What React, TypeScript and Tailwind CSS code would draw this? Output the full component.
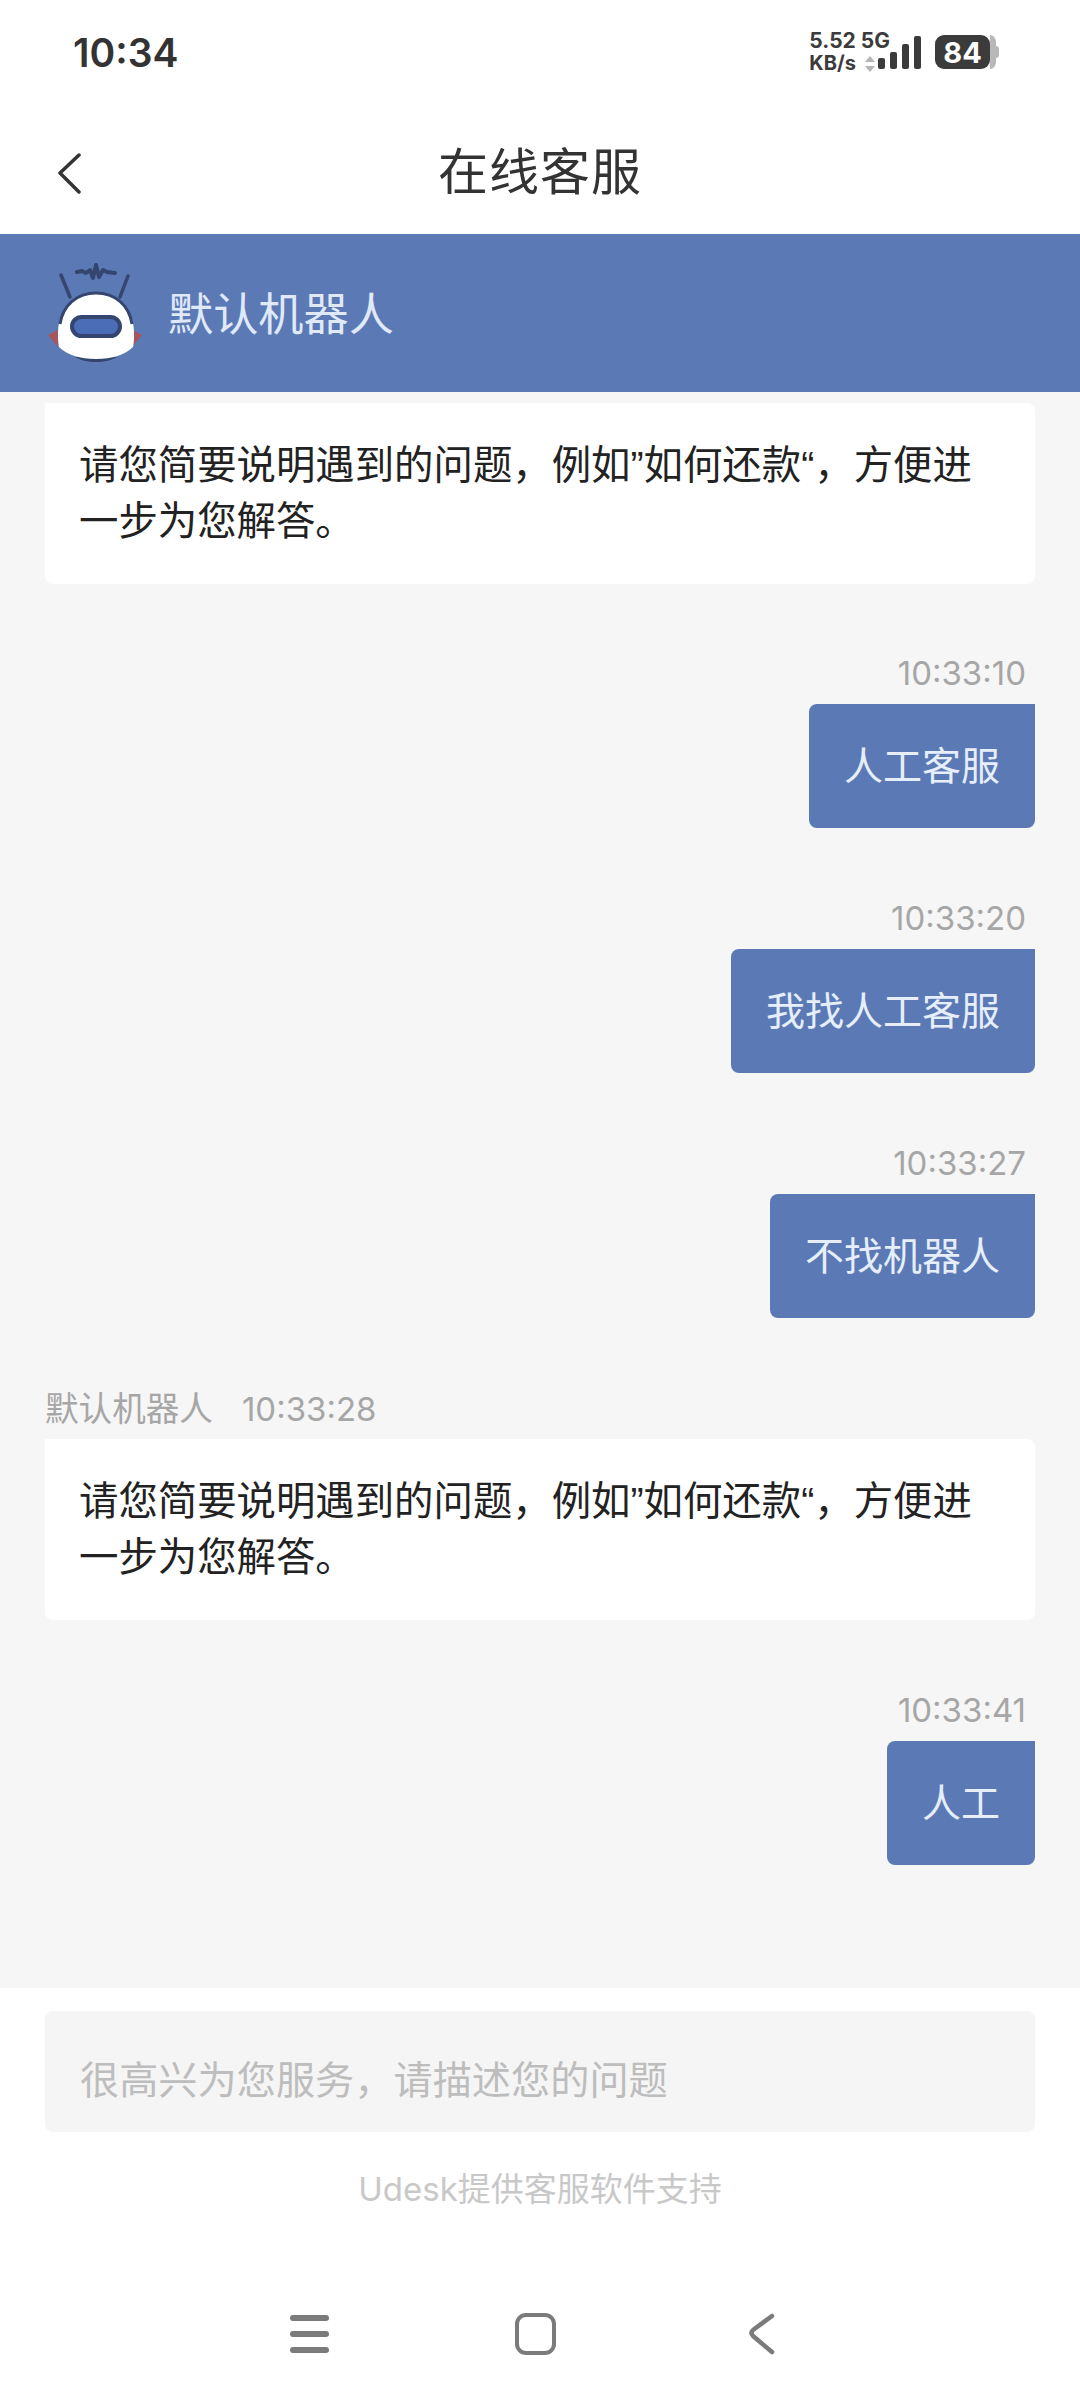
const font = "font-['Inter','Noto_Sans_CJK_SC',sans-serif]";

const StatusBar = () => (
  <div className="h-[100px] flex items-center justify-between pl-[73px] pr-[80px] pt-[4px] bg-white">
    <span className="text-[39px] leading-none font-semibold text-[#333333]">10:34</span>
    <div className="flex items-center">
      <div className="flex flex-col text-[#3b3b3b] font-bold leading-none">
        <span className="text-[21px] leading-[23px]">5.52 5G</span>
        <div className="flex items-center gap-[9px]">
          <span className="text-[20px] leading-[23px]">KB/s</span>
          <svg width="10" height="16" viewBox="0 0 10 16">
            <path d="M5 0l5 6H0zM5 16l5-6H0z" fill="#b5b5b5" />
          </svg>
        </div>
      </div>
      <svg width="44" height="34" viewBox="0 0 44 34" className="-ml-[12px] mr-[13px] mt-[1px]">
        <rect x="0" y="22" width="7" height="11" rx="2" fill="#3b3b3b" />
        <rect x="12" y="16" width="7" height="17" rx="2" fill="#3b3b3b" />
        <rect x="24" y="8" width="7" height="25" rx="2" fill="#3b3b3b" />
        <rect x="36" y="0" width="7" height="33" rx="2" fill="#3b3b3b" />
      </svg>
      <div className="flex items-center">
        <div className="w-[55px] h-[34px] rounded-[9px] bg-[#3b3b3b] text-white text-[29px] font-bold leading-none flex items-center justify-center">
          84
        </div>
        <svg width="10" height="34" viewBox="0 0 10 34">
          <path d="M0 0c3 0 5 2 6 6v5c2 0 3 1 3 3v6c0 2-1 3-3 3v5c-1 4-3 6-6 6z" fill="#b8b8b8" />
        </svg>
      </div>
    </div>
  </div>
);

const RobotLogo = () => (
  <svg width="96" height="100" viewBox="0 0 96 100" className="shrink-0">
    <path d="M30 9l5-1 4 2 4-3 3 8 3-13 3 12 4-7 4 2 8 1" fill="none" stroke="#34466f" strokeWidth="4" strokeLinecap="round" strokeLinejoin="round" />
    <path d="M14 12l9 22M81 13l-8 21" stroke="#34466f" strokeWidth="3.5" strokeLinecap="round" />
    <path d="M1 72l10-5v17z" fill="#a8545c" />
    <path d="M95 72l-10-5v17z" fill="#a8545c" />
    <path d="M28 94h42c-5 3-12 5-21 5s-16-2-21-5z" fill="#34466f" />
    <path d="M49 30c-23 0-38 17-38 40 0 5 0 10 1 14 8 8 21 12 37 12s29-4 37-12c1-4 1-9 1-14 0-23-15-40-38-40z" fill="#ffffff" />
    <path d="M13 61c3-19 17-31 36-31s33 12 36 31" fill="none" stroke="#34466f" strokeWidth="3" />
    <rect x="25" y="54" width="48" height="19" rx="9.5" fill="#4b6cb7" stroke="#34466f" strokeWidth="4" />
  </svg>
);

const Bubble = ({ time, text }: { time: string; text: string }) => (
  <div className="flex flex-col items-end">
    <span className="text-[33px] leading-[44px] text-[#a6a6a6] pr-[9px] mb-[9px]">{time}</span>
    <div className="bg-[#5b7ab5] text-[#e6eefb] text-[39px] leading-[56px] pl-[35px] pr-[35px] py-[34px] rounded-[8px] rounded-tr-none">
      {text}
    </div>
  </div>
);

const BotText = () => (
  <div className="bg-white text-[#222222] text-[39.4px] leading-[56px] pl-[34px] pr-[50px] pt-[34px] pb-[35px] rounded-[8px] rounded-tl-[2px] font-['Liberation_Sans','Noto_Sans_CJK_SC',sans-serif]">
    请您简要说明遇到的问题，例如”如何还款“，方便进一步为您解答。
  </div>
);

export default function App() {
  return (
    <div className={`w-[1080px] h-[2400px] flex flex-col bg-white ${font}`}>
      <StatusBar />

      <div className="h-[134px] relative flex items-center justify-center pt-[10px]">
        <svg width="26" height="41" viewBox="0 0 26 41" className="absolute left-[56px] top-[53px]" fill="none">
          <path d="M23 2L4 20l19 19" stroke="#333333" strokeWidth="3.5" strokeLinecap="round" strokeLinejoin="round" />
        </svg>
        <span className="text-[50px] leading-none text-[#333333] tracking-[1px]">在线客服</span>
      </div>

      <div className="h-[158px] bg-[#5b7ab5] flex items-center pl-[47px] gap-[25px]">
        <RobotLogo />
        <span className="text-[45.2px] leading-none text-[#e0e9f8] pt-[3px]">默认机器人</span>
      </div>

      <div className="flex-1 bg-[#f6f6f6] px-[45px] pt-[11px]">
        <BotText />

        <div className="flex flex-col gap-[68px] mt-[67px]">
          <Bubble time="10:33:10" text="人工客服" />
          <Bubble time="10:33:20" text="我找人工客服" />
          <Bubble time="10:33:27" text="不找机器人" />
        </div>

        <div className="mt-[69px]">
          <div className="text-[33px] leading-[44px] text-[#a6a6a6] mb-[8px] flex gap-[29px]">
            <span className="text-[33.6px]">默认机器人</span>
            <span>10:33:28</span>
          </div>
          <BotText />
        </div>

        <div className="mt-[68px]">
          <Bubble time="10:33:41" text="人工" />
        </div>
      </div>

      <div className="h-[412px] bg-white flex flex-col items-center px-[45px] pt-[23px]">
        <div className="w-full h-[121px] shrink-0 bg-[#f5f5f5] rounded-[8px] flex items-center pl-[35px] pt-[18px] text-[39.2px] text-[#bdbdbd]">
          很高兴为您服务，请描述您的问题
        </div>
        <span className="text-[33px] leading-none text-[#c8c8c8] mt-[41px]">Udesk提供客服软件支持</span>

        <div className="w-full flex items-center pl-[245px] mt-[107px]">
          <div className="flex flex-col gap-[10px]">
            <div className="w-[39px] h-[6px] rounded-full bg-[#7b7b7b]" />
            <div className="w-[39px] h-[6px] rounded-full bg-[#7b7b7b]" />
            <div className="w-[39px] h-[6px] rounded-full bg-[#7b7b7b]" />
          </div>
          <div className="w-[41px] h-[42px] ml-[186px] rounded-[11px] border-[4.5px] border-[#7b7b7b]" />
          <svg width="26" height="42" viewBox="0 0 26 42" fill="none" className="ml-[193px]">
            <path d="M23 3L4 17c-2 2-2 4 0 6l19 16" stroke="#7b7b7b" strokeWidth="4.5" strokeLinecap="round" strokeLinejoin="round" />
          </svg>
        </div>
      </div>
    </div>
  );
}
